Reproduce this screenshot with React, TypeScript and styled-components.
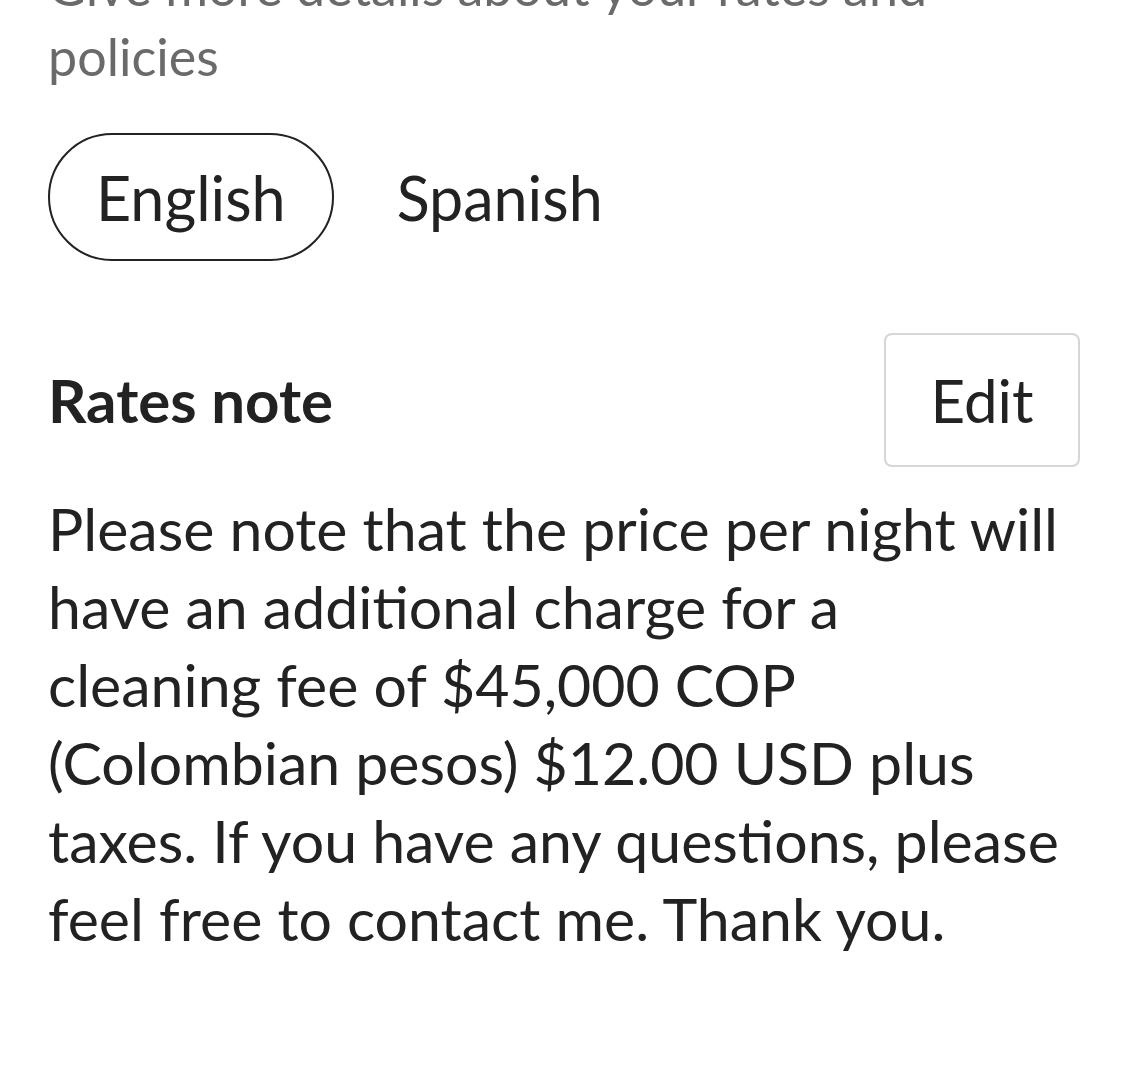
import React from "react";
import styled, { createGlobalStyle } from "styled-components";

const Global = createGlobalStyle`
  html, body { margin: 0; padding: 0; background: #fff; }
  body { font-family: Lato, "Open Sans", sans-serif; color: #222; }
`;

const Page = styled.div`
  width: 1127px;
  height: 1080px;
  overflow: hidden;
  box-sizing: border-box;
  padding: 0 47px 0 48px;
`;

const Intro = styled.p`
  margin: -49px 0 0;
  max-width: 900px;
  font-size: 52px;
  line-height: 70px;
  color: #6a6a6a;
`;

const LangRow = styled.div`
  display: flex;
  align-items: center;
  gap: 37px;
  margin-top: 42px;
`;

const LangTab = styled.button<{ $active?: boolean }>`
  font-family: inherit;
  font-size: 61px;
  color: #222;
  background: #fff;
  height: 128px;
  padding: 0 ${(p) => (p.$active ? "46px" : "24px")};
  border-radius: 64px;
  border: 2px solid ${(p) => (p.$active ? "#222" : "transparent")};
  box-sizing: border-box;
`;

const Header = styled.div`
  display: flex;
  align-items: center;
  justify-content: space-between;
  margin-top: 72px;
`;

const Title = styled.h2`
  margin: 0;
  font-size: 60px;
  font-weight: 700;
`;

const EditButton = styled.button`
  font-family: inherit;
  font-size: 60px;
  color: #222;
  background: #fff;
  width: 196px;
  height: 134px;
  border: 2px solid #d6d6d6;
  border-radius: 8px;
`;

const Note = styled.p`
  margin: 23px -40px 0 0;
  font-size: 59px;
  line-height: 78px;
  color: #222;
`;

const NoteLine = styled.span`
  display: block;
  white-space: nowrap;
`;

const noteLines = [
  "Please note that the price per night will",
  "have an additional charge for a",
  "cleaning fee of $45,000 COP",
  "(Colombian pesos) $12.00 USD plus",
  "taxes. If you have any questions, please",
  "feel free to contact me. Thank you.",
];

export default function App() {
  return (
    <Page>
      <Global />
      <Intro>Give more details about your rates and policies</Intro>
      <LangRow>
        <LangTab $active>English</LangTab>
        <LangTab>Spanish</LangTab>
      </LangRow>
      <Header>
        <Title>Rates note</Title>
        <EditButton>Edit</EditButton>
      </Header>
      <Note>
        {noteLines.map((l) => (
          <NoteLine key={l}>{l}</NoteLine>
        ))}
      </Note>
    </Page>
  );
}
